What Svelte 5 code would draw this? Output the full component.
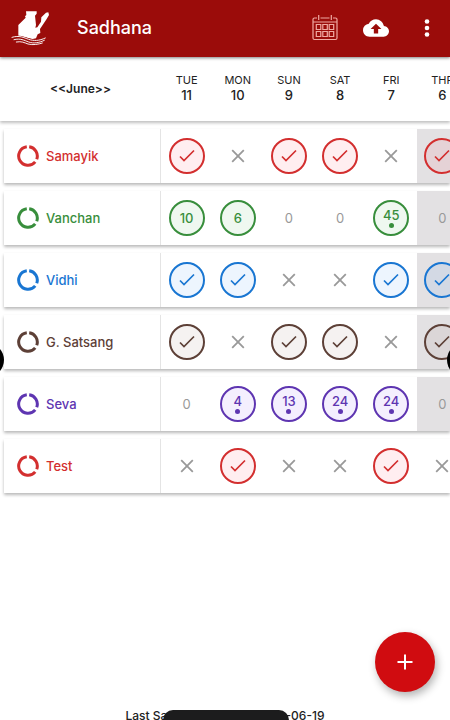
<script>
  const days = [
    ['TUE', 11],
    ['MON', 10],
    ['SUN', 9],
    ['SAT', 8],
    ['FRI', 7],
    ['THR', 6],
  ];

  // v = done, x = missed, numbers are counts, a trailing dot marks a remark
  const rows = [
    { name: 'Samayik', tone: 'red', cells: ['v', 'x', 'v', 'v', 'x', 'v'], shaded: true },
    { name: 'Vanchan', tone: 'green', cells: ['10', '6', '0', '0', '45.', '0'], shaded: true },
    { name: 'Vidhi', tone: 'blue', cells: ['v', 'v', 'x', 'x', 'v', 'v'], shaded: true },
    { name: 'G. Satsang', tone: 'brown', cells: ['v', 'x', 'v', 'v', 'x', 'v'], shaded: true },
    { name: 'Seva', tone: 'purple', cells: ['0', '4.', '13.', '24.', '24.', '0'], shaded: true },
    { name: 'Test', tone: 'red', cells: ['x', 'v', 'x', 'x', 'v', 'x'], shaded: false },
  ];
</script>

<div class="page">
  <header>
    <svg class="logo" viewBox="33 27 120 108" aria-hidden="true">
      <path d="M78 31h32v7l-5 6 3 28-2 8 6-1 11-17 1-13 14-14 7-1 2 8-7 12-20 30 1 12-8 4-5 12-10 2-14-3-16-4-13-1V72l22-22-2-4 4-4z" fill="#fff" />
      <path d="M36 109c22-7 35 1 50 6s31 5 50-4" fill="none" stroke="#9b0c0a" stroke-width="6" />
      <path d="M36 109c22-7 35 1 50 6s31 5 50-4M42 116c20-5 30 2 44 7s30 3 47-5M49 123c16-3 24 2 35 6 15 4 31 1 43-3" fill="none" stroke="#fff" stroke-width="2.8" stroke-linecap="round" />
    </svg>
    <h1>Sadhana</h1>
    <nav>
      <button aria-label="Calendar">
        <svg width="26" height="26" viewBox="0 0 26 26" fill="none" stroke="#f0aaa3" stroke-width="1.200">
          <path d="M5 3H2.500Q1 3 1 4.500V23q0 1.500 1.500 1.500h21Q25 24.500 25 23V4.500Q25 3 23.500 3H21M8.500 3h9M1 7h24M6.700 0v5M19.300 0v5" />
          <path d="M4.300 9.500h4.500v5H4.300zM10.800 9.500h4.500v5h-4.500zM17.200 9.500h4.500v5h-4.500zM4.300 16.500h4.500v5H4.300zM10.800 16.500h4.500v5h-4.500zM17.200 16.500h4.500v5h-4.500z" />
        </svg>
      </button>
      <button aria-label="Upload">
        <svg width="26" height="26" viewBox="0 0 24 24" fill="#fff">
          <path d="M19.350 10.040A7.490 7.490 0 0 0 12 4C9.110 4 6.600 5.640 5.350 8.040A5.994 5.994 0 0 0 0 14c0 3.310 2.690 6 6 6h13c2.760 0 5-2.240 5-5 0-2.640-2.050-4.780-4.650-4.960zM14 13v4h-4v-4H7l5-5 5 5h-3z" />
        </svg>
      </button>
      <button aria-label="More options">
        <svg width="26" height="26" viewBox="0 0 26 26" fill="#fff">
          <circle cx="13" cy="6.500" r="2.300" /><circle cx="13" cy="13" r="2.300" /><circle cx="13" cy="19.500" r="2.300" />
        </svg>
      </button>
    </nav>
  </header>

  <main>
    <div class="row head">
      <button class="month">&lt;&lt;June&gt;&gt;</button>
      <div class="days">
        {#each days as [day, date]}
          <div class="day"><span>{day}</span><b>{date}</b></div>
        {/each}
      </div>
    </div>

    <div class="list">
      {#each rows as row}
        <div class="row card {row.tone}">
          <div class="name">
            <svg width="22" height="22" viewBox="0 0 22 22" fill="none" stroke="currentColor" stroke-width="3" aria-hidden="true">
              <path d="M12.200 1.800A9.300 9.300 0 0 1 19.700 14.300M18.200 16.900A9.300 9.300 0 1 1 9.800 1.800" />
            </svg>
            <span>{row.name}</span>
          </div>
          <div class="days">
            {#each row.cells as cell, i}
              <button class="cell" class:shaded={row.shaded && i === 5} aria-label="{row.name} {days[i][0]} {days[i][1]}">
                {#if cell === 'v'}
                  <span class="ring">
                    <svg width="18" height="14" viewBox="0 0 18 14"><path d="M2 7.500 6 11.500 16 1.500" fill="none" stroke="currentColor" stroke-width="1.700" /></svg>
                  </span>
                {:else if cell === 'x'}
                  <svg width="14" height="14" viewBox="0 0 14 14"><path d="M1.200 1.200l11.600 11.600M12.800 1.200L1.200 12.800" stroke="#999" stroke-width="1.800" /></svg>
                {:else if cell === '0'}
                  <span class="zero">0</span>
                {:else}
                  <span class="ring">
                    {cell.replace('.', '')}
                    {#if cell.endsWith('.')}<i></i>{/if}
                  </span>
                {/if}
              </button>
            {/each}
          </div>
        </div>
      {/each}
    </div>
  </main>

  <button class="fab" aria-label="Add">
    <svg width="16" height="16" viewBox="0 0 16 16"><path d="M8 .5v15M.5 8h15" stroke="#fff" stroke-width="2" /></svg>
  </button>
  <footer><span>Last Sa</span><span>-06-19</span></footer>
  <div class="pill"></div>
  <div class="edge left"></div>
  <div class="edge right"></div>
</div>

<style>
  :global(body) { margin: 0; }
  .page {
    position: relative;
    display: flex;
    flex-direction: column;
    height: 100vh;
    overflow: hidden;
    background: #fff;
    color: #222;
    font-family: Inter, Roboto, sans-serif;
  }
  button {
    padding: 0;
    border: 0;
    background: none;
    color: inherit;
    font: inherit;
    cursor: pointer;
  }
  svg { display: block; }
  header {
    position: relative;
    z-index: 2;
    display: flex;
    align-items: center;
    height: 57px;
    flex: none;
    box-sizing: border-box;
    padding: 0 10px 2px 11px;
    background: #9b0c0a;
    box-shadow: 0 1px 3px rgba(0, 0, 0, 0.5);
    color: #fff;
  }
  .logo { width: 40px; height: 36px; }
  h1 {
    margin: 0 0 0 26px;
    font-size: 18px;
    line-height: 24px;
    font-weight: 500;
  }
  nav { display: flex; gap: 25px; margin-left: auto; }
  main { flex: 1; }
  .row {
    display: grid;
    grid-template-columns: 157px 1fr;
  }
  .days {
    display: grid;
    grid-template-columns: repeat(6, 1fr);
    margin-right: -18px;
  }
  .head {
    position: relative;
    z-index: 1;
    height: 64px;
    padding-left: 4px;
    background: #fff;
    box-shadow: 0 2px 3px rgba(0, 0, 0, 0.25);
  }
  .month {
    padding-right: 4px;
    padding-bottom: 2px;
    font-size: 12px;
    font-weight: 600;
  }
  .day {
    display: flex;
    flex-direction: column;
    align-items: center;
    justify-content: center;
    padding-bottom: 2px;
    font-size: 11px;
    line-height: 15px;
  }
  .day b { font-size: 13px; font-weight: 500; }
  .list {
    display: flex;
    flex-direction: column;
    gap: 8px;
    padding: 8px 0 0 4px;
  }
  .card {
    height: 54px;
    background: #fff;
    box-shadow: 0 2px 3px rgba(0, 0, 0, 0.28);
    color: var(--tone);
  }
  .red { --tone: #d32f2f; --fill: rgba(255, 40, 60, 0.08); }
  .green { --tone: #388e3c; --fill: rgba(56, 160, 60, 0.08); }
  .blue { --tone: #1976d2; --fill: rgba(25, 130, 240, 0.08); }
  .brown { --tone: #5d4037; --fill: rgba(120, 70, 50, 0.07); }
  .purple { --tone: #5e35b1; --fill: rgba(120, 50, 240, 0.08); }
  .name {
    display: flex;
    align-items: center;
    gap: 7px;
    padding-left: 13px;
    border-right: 1px solid #e4e4e4;
    font-size: 13px;
    font-weight: 500;
  }
  .cell {
    display: flex;
    align-items: center;
    justify-content: center;
  }
  .shaded { background: #e3e1e3; }
  .ring {
    display: flex;
    flex-direction: column;
    align-items: center;
    justify-content: center;
    width: 36px;
    height: 36px;
    box-sizing: border-box;
    border: 2px solid var(--tone);
    border-radius: 50%;
    background: var(--fill);
    font-size: 13px;
    line-height: 14px;
    font-weight: 500;
  }
  .ring i {
    width: 5px;
    height: 5px;
    margin-top: 1px;
    border-radius: 50%;
    background: currentColor;
  }
  .zero { color: #999; font-size: 13px; }
  .fab {
    position: absolute;
    right: 15px;
    bottom: 28px;
    display: grid;
    place-items: center;
    width: 60px;
    height: 60px;
    border-radius: 50%;
    background: #d00c10;
    box-shadow: 2px 4px 8px rgba(0, 0, 0, 0.3);
  }
  footer {
    display: flex;
    justify-content: space-between;
    width: 199px;
    height: 12px;
    margin: 0 auto;
    font-size: 12px;
    line-height: 16px;
    font-weight: 500;
  }
  .pill {
    position: absolute;
    bottom: -10px;
    left: 50%;
    width: 126px;
    height: 20px;
    margin-left: -62px;
    border-radius: 10px;
    background: #1c1c1d;
  }
  .edge {
    position: absolute;
    z-index: 3;
    top: 50%;
    width: 34px;
    height: 34px;
    margin-top: -17px;
    border-radius: 50%;
    background: #000;
  }
  .left { left: -30px; }
  .right { right: -31px; }
</style>
